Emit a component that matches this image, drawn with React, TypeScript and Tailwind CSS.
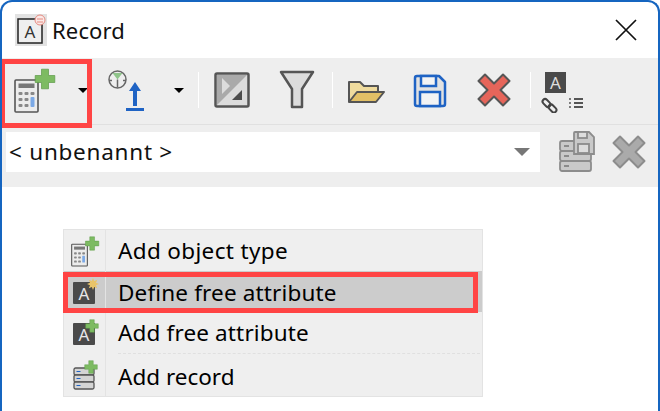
import React from 'react';

const Plus = ({ x, y, s = 1 }: { x: number; y: number; s?: number }) => (
  <path
    transform={`translate(${x} ${y}) scale(${s})`}
    d="M-2.500 -7h5v4.500h4.500v5h-4.500v4.500h-5v-4.500h-4.500v-5h4.500z"
    fill="#7dbb62"
    stroke="#5c9a48"
    strokeWidth="0.500"
  />
);

const Calc = () => (
  <g transform="translate(0 4)">
    <rect x="1" y="9" width="23" height="32" rx="1" fill="#ececec" stroke="#555" strokeWidth="1.600" />
    <rect x="4.500" y="12.500" width="16" height="4.500" fill="#777" />
    {[21, 27, 33].map(y =>
      [4.500, 10.500].map(x => <rect key={`${x}${y}`} x={x} y={y} width="4" height="3" rx="1" fill="#888" />)
    )}
    <rect x="16.500" y="21" width="4" height="3" rx="1" fill="#888" />
    <rect x="16.500" y="26" width="4" height="10" rx="1" fill="#7ba9e6" />
  </g>
);

const AddObjectIcon = () => (
  <svg width="44" height="46" viewBox="0 0 44 46">
    <Calc />
    <Plus x={31} y={12} s={1.400} />
  </svg>
);

const ImportIcon = () => (
  <svg width="40" height="46" viewBox="0 0 40 46">
    <circle cx="13.500" cy="12.500" r="8.500" fill="#eee" stroke="#666" strokeWidth="1.500" />
    <path d="M8.500 6h10l-5 6.500z" fill="#8fc48a" />
    <path d="M13.500 12.500v8M5 13.500h3M19 13.500h3" stroke="#666" strokeWidth="1.500" />
    <path d="M31 15l6 9h-4v15h-4v-15h-4z" fill="#1f63c4" />
    <rect x="22" y="41" width="18" height="3" fill="#1f63c4" />
  </svg>
);

const ContrastIcon = () => (
  <svg width="36" height="36" viewBox="0 0 36 36">
    <rect x="1.500" y="1.500" width="33" height="33" rx="1.500" fill="#dcdcdc" stroke="#555" strokeWidth="2.500" />
    <path d="M3 33L33 3H3z" fill="#aaa" />
    <path d="M8 6l8 8-8 8z" fill="#dcdcdc" />
    <path d="M18 28l10-10v10z" fill="#4d4d4d" />
  </svg>
);

const FunnelIcon = () => (
  <svg width="36" height="40" viewBox="0 0 36 40">
    <path d="M2 2h32l-11 17v18h-10v-18z" fill="#dcdcdc" stroke="#555" strokeWidth="2.500" strokeLinejoin="round" />
  </svg>
);

const FolderIcon = () => (
  <svg className="mt-[4px]" width="38" height="24" viewBox="0 0 38 24">
    <path d="M2 22V2h11l4 4h14v6" fill="#efdb9d" stroke="#555" strokeWidth="2" strokeLinejoin="round" />
    <path d="M2 22l8-10h27l-8 10z" fill="#e2c066" stroke="#555" strokeWidth="2" strokeLinejoin="round" />
  </svg>
);

const SaveIcon = () => (
  <svg className="mt-[2px]" width="34" height="34" viewBox="0 0 34 34">
    <path d="M2 4a2 2 0 0 1 2-2h22l6 6v22a2 2 0 0 1-2 2H4a2 2 0 0 1-2-2z" fill="#e2e2e2" stroke="#1f63c4" strokeWidth="2.500" strokeLinejoin="round" />
    <rect x="8" y="2" width="15" height="10" fill="#f4f4f4" stroke="#1f63c4" strokeWidth="2.500" />
    <rect x="7" y="18" width="20" height="14" fill="#f4f4f4" stroke="#1f63c4" strokeWidth="2.500" />
  </svg>
);

const CrossIcon = ({ fill, stroke }: { fill: string; stroke: string }) => (
  <svg width="36" height="36" viewBox="0 0 36 36">
    <path
      d="M9 2.500L18 11.500L27 2.500L33.500 9L24.500 18L33.500 27L27 33.500L18 24.500L9 33.500L2.500 27L11.500 18L2.500 9z"
      fill={fill}
      stroke={stroke}
      strokeWidth="2"
      strokeLinejoin="round"
    />
  </svg>
);

const LinkListIcon = () => (
  <svg width="46" height="46" viewBox="0 0 46 46">
    <rect x="5" y="5" width="21" height="21" fill="#4a4a4a" />
    <text x="15.500" y="22" textAnchor="middle" fontSize="17" fill="#ddd" fontFamily="'Noto Sans', sans-serif">A</text>
    <g fill="none" stroke="#444" strokeWidth="2">
      <rect x="2" y="33.500" width="9" height="5" rx="2.500" transform="rotate(45 6.500 36)" />
      <rect x="8" y="39" width="9" height="5" rx="2.500" transform="rotate(45 12.500 41.500)" />
    </g>
    <path d="M30 31v2M30 35v2M30 39v2" stroke="#555" strokeWidth="1.500" />
    <path d="M34 32h9M34 36h9M34 40h9" stroke="#555" strokeWidth="2" />
  </svg>
);

const Caret = ({ className }: { className: string }) => (
  <div className={`w-0 h-0 border-x-[5px] border-x-transparent border-t-[5px] border-t-black ${className}`} />
);

const Sep = () => <div className="w-[1px] h-[36px] bg-white" />;

const RecordSaveIcon = () => (
  <svg width="36" height="42" viewBox="0 0 36 42">
    <g fill="#c9c9c9" stroke="#8c8c8c" strokeWidth="1.800">
      <rect x="1" y="10" width="31" height="10" rx="2" />
      <rect x="1" y="20" width="31" height="10" rx="2" />
      <rect x="1" y="30" width="31" height="10" rx="2" />
      <path d="M15 2a1 1 0 0 1 1-1h14l5 5v17h-20z" />
      <rect x="19" y="1" width="9" height="6" fill="#ddd" />
      <rect x="19" y="13" width="11" height="9" fill="#ddd" />
    </g>
    <path d="M5 15h5M5 25h5M5 35h5" stroke="#777" strokeWidth="1.500" />
  </svg>
);

const AttrBox = ({ children }: { children?: React.ReactNode }) => (
  <svg width="26" height="28" viewBox="0 0 26 28">
    <rect x="0" y="4" width="22" height="22" rx="1" fill="#4a4a4a" />
    <text x="11" y="22" textAnchor="middle" fontSize="17" fill="#e8e8e8" fontFamily="'Noto Sans', sans-serif">A</text>
    {children}
  </svg>
);

const MenuRow = ({ icon, label, active, textClass }: { icon: React.ReactNode; label: string; active?: boolean; textClass: string }) => (
  <div className={`flex items-center h-[41px] ${active ? 'bg-[#cccccc]' : ''}`}>
    <div className="w-[43px] flex justify-center">{icon}</div>
    <span className={`ml-[11px] text-[22.5px] text-black ${textClass}`}>{label}</span>
  </div>
);

export default function App() {
  return (
    <div className="relative w-[660px] h-[411px] overflow-hidden bg-white rounded-t-[12px] border-x-2 border-t-2 border-[#1565c0] font-['Noto_Sans',sans-serif]">
      {/* title bar */}
      <div className="flex items-center h-[56px] pl-[13px] pr-[21px]">
        <svg width="32" height="32" viewBox="0 0 32 32">
          <rect width="32" height="32" fill="#e2e2e2" />
          <rect x="3" y="5" width="24" height="24" fill="#efefef" stroke="#222" strokeWidth="1.500" />
          <text x="15" y="24" textAnchor="middle" fontSize="17" fill="#333" fontFamily="'Noto Sans', sans-serif">A</text>
          <circle cx="25" cy="6" r="5" fill="#fbe9e7" stroke="#e58a80" strokeWidth="1" />
          <path d="M22 5h6M22 8h6" stroke="#e58a80" strokeWidth="1" />
        </svg>
        <span className="ml-[5px] text-[22px] tracking-[0.15px] text-[#111]">Record</span>
        <svg className="ml-auto" width="22" height="22" viewBox="0 0 22 22">
          <path d="M1 1l20 20M21 1L1 21" stroke="#111" strokeWidth="1.700" />
        </svg>
      </div>

      {/* toolbar */}
      <div className="flex items-center h-[67px] bg-[#eeeeee] border-b border-[#e0e0e0] pb-[2px]">
        <div className="ml-[12px]"><AddObjectIcon /></div>
        <Caret className="ml-[20px]" />
        <div className="ml-[16px]"><ImportIcon /></div>
        <Caret className="ml-[30px]" />
        <div className="ml-[14px]"><Sep /></div>
        <div className="ml-[15px]"><ContrastIcon /></div>
        <div className="ml-[29px]"><FunnelIcon /></div>
        <div className="ml-[17px]"><Sep /></div>
        <div className="ml-[14px]"><FolderIcon /></div>
        <div className="ml-[28px]"><SaveIcon /></div>
        <div className="ml-[29px]"><CrossIcon fill="#e6655a" stroke="#555" /></div>
        <div className="ml-[18px]"><Sep /></div>
        <div className="ml-[9px]"><LinkListIcon /></div>
      </div>

      {/* record selector */}
      <div className="flex items-center h-[62px] bg-[#eeeeee] pl-[4px] pb-[8px]">
        <div className="flex items-center w-[534px] h-[40px] bg-white pl-[3px] pr-[10px]">
          <span className="text-[22.5px] tracking-[0.75px] text-[#111]">&lt; unbenannt &gt;</span>
          <div className="ml-auto w-0 h-0 border-x-[8px] border-x-transparent border-t-[8px] border-t-[#777]" />
        </div>
        <div className="ml-[19px]"><RecordSaveIcon /></div>
        <div className="ml-[16px]"><CrossIcon fill="#aaaaaa" stroke="#8c8c8c" /></div>
      </div>

      {/* context menu */}
      <div className="ml-[61px] mt-[42px] w-[420px] h-[168px] bg-[#efefef] border border-[#e3e3e3] relative">
        <div className="absolute left-[41px] top-0 bottom-0 w-[1px] bg-[#e3e3e3]" />
        <MenuRow
          label="Add object type"
          textClass="tracking-[0.35px]"
          icon={
            <svg width="30" height="32" viewBox="0 0 44 46">
              <Calc />
              <Plus x={31} y={12} s={1.400} />
            </svg>
          }
        />
        <MenuRow
          active
          label="Define free attribute"
          textClass="tracking-[0.15px] pt-[3px]"
          icon={
            <AttrBox>
              <path d="M20 0l1.200 3 3-1.200-1.200 3 3 1.200-3 1.200 1.200 3-3-1.200-1.200 3-1.200-3-3 1.200 1.200-3-3-1.200 3-1.200-1.200-3 3 1.200z" fill="#e9c46a" />
            </AttrBox>
          }
        />
        <MenuRow
          label="Add free attribute"
          textClass="tracking-[0.15px]"
          icon={
            <AttrBox>
              <Plus x={19} y={7} s={0.900} />
            </AttrBox>
          }
        />
        <div className="ml-[54px] mr-[2px] border-t border-dashed border-[#e0e0e0]" />
        <MenuRow
          label="Add record"
          textClass="pt-[5px]"
          icon={
            <svg width="26" height="30" viewBox="0 0 26 30">
              <g fill="#d4d4d4" stroke="#555" strokeWidth="1.300">
                <rect x="1" y="8" width="20" height="7" rx="1.500" />
                <rect x="1" y="15" width="20" height="7" rx="1.500" />
                <rect x="1" y="22" width="20" height="7" rx="1.500" />
              </g>
              <path d="M3.500 11.500h4M3.500 18.500h4M3.500 25.500h4" stroke="#1f63c4" strokeWidth="1.200" />
              <Plus x={18} y={7} s={0.900} />
            </svg>
          }
        />
      </div>

      {/* red callouts drawn over the screenshot */}
      <div className="absolute left-[-2px] top-[57px] w-[92px] h-[69px] border-[5px] border-[#ff4444]" />
      <div className="absolute left-[61px] top-[270px] w-[415px] h-[41px] border-[5px] border-[#ff4444]" />
    </div>
  );
}
